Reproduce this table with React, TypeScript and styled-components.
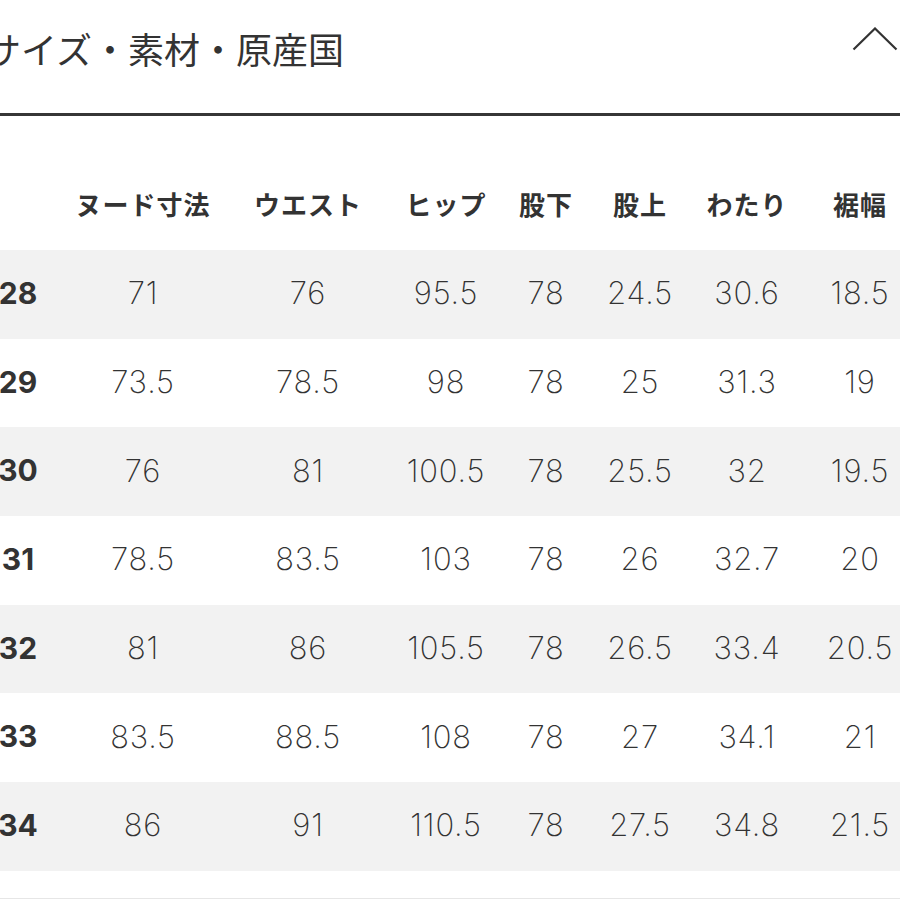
import styled, { createGlobalStyle } from 'styled-components';

const GlobalStyle = createGlobalStyle`
  html, body {
    margin: 0;
    padding: 0;
    background: #ffffff;
  }
  body {
    font-family: 'Noto Sans CJK JP', 'Noto Sans', sans-serif;
    color: #333333;
    overflow: hidden;
  }
`;

const Page = styled.div`
  width: 900px;
  height: 900px;
  overflow: hidden;
  background: #ffffff;
`;

const TitleBar = styled.div`
  display: flex;
  justify-content: space-between;
  align-items: flex-start;
  height: 116px;
  box-sizing: border-box;
  border-bottom: 3px solid #363636;
  padding-right: 2px;
`;

const Title = styled.h2`
  margin: 30px 0 0 -15px;
  font-family: 'Noto Sans CJK JP', sans-serif;
  font-size: 36px;
  line-height: 36px;
  font-weight: 400;
  color: #333333;
  white-space: nowrap;
`;

const Chevron = styled.svg`
  margin-top: 27px;
  width: 46px;
  height: 24px;
`;

const Table = styled.div`
  display: grid;
  grid-template-columns: 76px 174px 156px 120px 80px 108px 106px 120px;
  margin: 44px 0 0 -20px;
  width: 940px;
`;

const HeadCell = styled.div`
  height: 90px;
  display: flex;
  align-items: center;
  justify-content: center;
  padding-bottom: 4px;
  box-sizing: border-box;
  font-family: 'Noto Sans CJK JP', sans-serif;
  font-weight: 700;
  font-size: 26px;
  letter-spacing: 1px;
  color: #333333;
  white-space: nowrap;
`;

const Cell = styled.div<{ $shaded: boolean; $size?: boolean }>`
  height: 88.7px;
  display: flex;
  align-items: center;
  justify-content: center;
  padding-bottom: 3px;
  box-sizing: border-box;
  background: ${(p) => (p.$shaded ? '#f2f2f2' : '#ffffff')};
  font-family: Inter, 'Liberation Sans', sans-serif;
  font-size: ${(p) => (p.$size ? '30px' : '31px')};
  font-weight: ${(p) => (p.$size ? 700 : 200)};
  letter-spacing: ${(p) => (p.$size ? '0' : '0.8px')};
  color: #333333;
  white-space: nowrap;
`;

const Footer = styled.div`
  height: 27px;
  border-bottom: 1px solid #e6e6e6;
`;

const headers = ['', 'ヌード寸法', 'ウエスト', 'ヒップ', '股下', '股上', 'わたり', '裾幅'];

const rows = [
  ['28', '71', '76', '95.5', '78', '24.5', '30.6', '18.5'],
  ['29', '73.5', '78.5', '98', '78', '25', '31.3', '19'],
  ['30', '76', '81', '100.5', '78', '25.5', '32', '19.5'],
  ['31', '78.5', '83.5', '103', '78', '26', '32.7', '20'],
  ['32', '81', '86', '105.5', '78', '26.5', '33.4', '20.5'],
  ['33', '83.5', '88.5', '108', '78', '27', '34.1', '21'],
  ['34', '86', '91', '110.5', '78', '27.5', '34.8', '21.5'],
];

export default function App() {
  return (
    <Page>
      <GlobalStyle />
      <TitleBar>
        <Title>サイズ・素材・原産国</Title>
        <Chevron viewBox="0 0 46 24" fill="none">
          <path d="M1.5 22.5 L23 1.5 L44.5 22.5" stroke="#333333" strokeWidth="2.2" />
        </Chevron>
      </TitleBar>
      <Table>
        {headers.map((h, i) => (
          <HeadCell key={`h${i}`}>{h}</HeadCell>
        ))}
        {rows.map((row, r) =>
          row.map((v, c) => (
            <Cell key={`${r}-${c}`} $shaded={r % 2 === 0} $size={c === 0}>
              {v}
            </Cell>
          ))
        )}
      </Table>
      <Footer />
    </Page>
  );
}
